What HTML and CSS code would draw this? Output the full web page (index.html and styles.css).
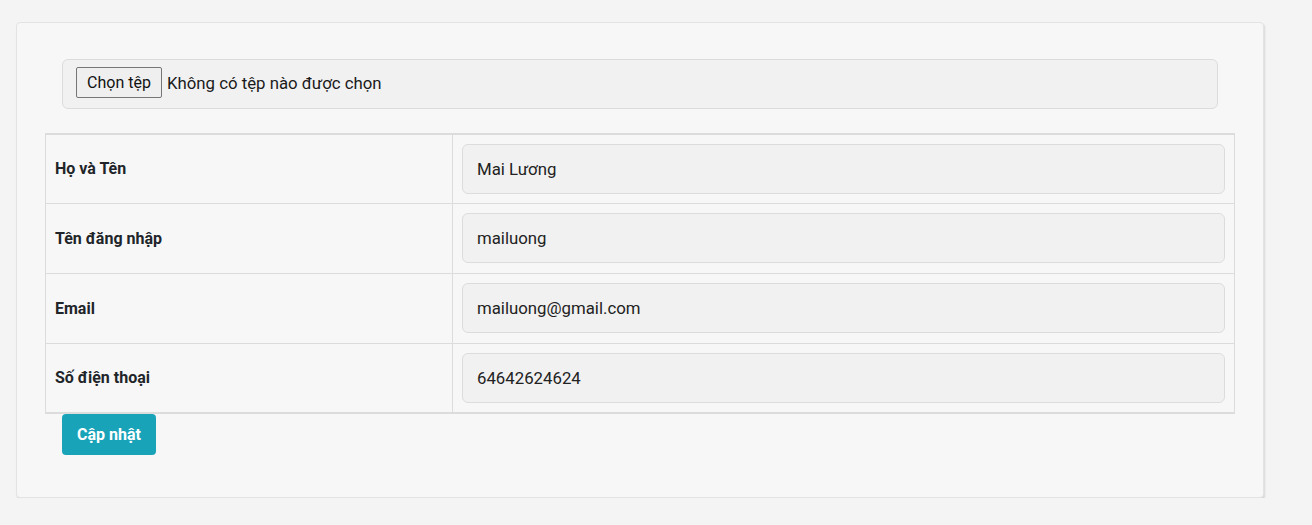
FILE: index.html
```html
<!DOCTYPE html>
<html lang="vi">
<head>
<meta charset="utf-8">
<title>Cập nhật thông tin</title>
<link rel="stylesheet" href="styles.css">
</head>
<body>
<div class="card">
  <div class="file-box">
    <span class="file-btn">Chọn tệp</span>
    <span class="file-text">Không có tệp nào được chọn</span>
  </div>
  <table class="info">
    <tr>
      <th>Họ và Tên</th>
      <td><div class="field">Mai Lương</div></td>
    </tr>
    <tr>
      <th>Tên đăng nhập</th>
      <td><div class="field">mailuong</div></td>
    </tr>
    <tr>
      <th>Email</th>
      <td><div class="field">mailuong@gmail.com</div></td>
    </tr>
    <tr>
      <th>Số điện thoại</th>
      <td><div class="field">64642624624</div></td>
    </tr>
  </table>
  <div class="actions">
    <span class="btn">Cập nhật</span>
  </div>
</div>
</body>
</html>
```
FILE: styles.css
```css
* { box-sizing: border-box; }
html, body { margin: 0; }
body {
  background: #f4f4f4;
  font-family: Roboto, "Noto Sans", "Liberation Sans", sans-serif;
  color: #212529;
  padding: 22px 0 0 16px;
}
.card {
  width: 1248px;
  height: 476px;
  background: #f7f7f7;
  border: 1px solid #e3e3e3;
  border-radius: 4px;
  box-shadow: 1px 2px 2px rgba(0, 0, 0, 0.12);
  padding: 36px 28px 0;
}
.file-box {
  margin: 0 17px;
  height: 50px;
  background: #f1f1f1;
  border: 1px solid #dcdcdc;
  border-radius: 6px;
  display: flex;
  align-items: center;
  padding: 0 0 3px 13px;
  font-size: 16.8px;
  color: #1a1a1a;
}
.file-btn {
  display: inline-flex;
  align-items: center;
  justify-content: center;
  width: 86px;
  height: 31px;
  background: #efefef;
  border: 1px solid #767676;
  border-radius: 2px;
  margin-right: 5px;
  color: #111;
  font-size: 16px;
}
.info {
  margin-top: 24px;
  width: 1190px;
  border-collapse: collapse;
  border-top: 2px solid #dcdcdc;
  border-bottom: 2px solid #dcdcdc;
}
.info th, .info td {
  border: 1px solid #dcdcdc;
  height: 70px;
  vertical-align: middle;
}
.info tr:first-child th, .info tr:first-child td {
  height: 69px;
}
.info th {
  width: 407px;
  text-align: left;
  font-size: 16px;
  font-weight: 700;
  padding: 0 9px;
  color: #212529;
}
.info td {
  padding: 0 9px;
}
.field {
  height: 50px;
  background: #f1f1f1;
  border: 1px solid #dcdcdc;
  border-radius: 6px;
  display: flex;
  align-items: center;
  padding-left: 14px;
  font-size: 16.8px;
  color: #222;
}
.actions {
  padding-left: 17px;
}
.btn {
  display: inline-flex;
  align-items: center;
  justify-content: center;
  width: 94px;
  height: 41px;
  background: #19a3b9;
  color: #fff;
  font-weight: 700;
  font-size: 16px;
  border-radius: 4px;
}
```
